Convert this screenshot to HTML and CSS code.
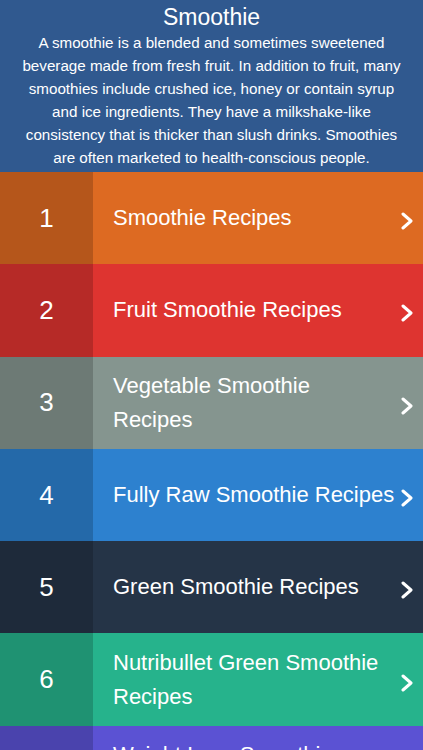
FILE: index.html
```html
<!DOCTYPE html>
<html>
    <head>
        <title>Smoothie</title>
        <link rel="stylesheet" href="styles.css">
    </head>
    <body>
        <div class="intro">
            <h1 class="introTitle">Smoothie</h1>
            <p class="introText">A smoothie is a blended and sometimes sweetened<br>beverage made from fresh fruit. In addition to fruit, many<br>smoothies include crushed ice, honey or contain syrup<br>and ice ingredients. They have a milkshake-like<br>consistency that is thicker than slush drinks. Smoothies<br>are often marketed to health-conscious people.</p>
        </div>

        <div class="list">
            <div class="row orange">
                <div class="num">1</div>
                <div class="label">Smoothie Recipes</div>
                <svg class="chev" width="12" height="18" viewBox="0 0 12 18"><path d="M2 2 L10 9 L2 16" /></svg>
            </div>
            <div class="row red">
                <div class="num">2</div>
                <div class="label">Fruit Smoothie Recipes</div>
                <svg class="chev" width="12" height="18" viewBox="0 0 12 18"><path d="M2 2 L10 9 L2 16" /></svg>
            </div>
            <div class="row grey">
                <div class="num">3</div>
                <div class="label">Vegetable Smoothie<br>Recipes</div>
                <svg class="chev" width="12" height="18" viewBox="0 0 12 18"><path d="M2 2 L10 9 L2 16" /></svg>
            </div>
            <div class="row blue">
                <div class="num">4</div>
                <div class="label">Fully Raw Smoothie Recipes</div>
                <svg class="chev" width="12" height="18" viewBox="0 0 12 18"><path d="M2 2 L10 9 L2 16" /></svg>
            </div>
            <div class="row navy">
                <div class="num">5</div>
                <div class="label">Green Smoothie Recipes</div>
                <svg class="chev" width="12" height="18" viewBox="0 0 12 18"><path d="M2 2 L10 9 L2 16" /></svg>
            </div>
            <div class="row green">
                <div class="num">6</div>
                <div class="label">Nutribullet Green Smoothie<br>Recipes</div>
                <svg class="chev" width="12" height="18" viewBox="0 0 12 18"><path d="M2 2 L10 9 L2 16" /></svg>
            </div>
            <div class="row purple">
                <div class="num">7</div>
                <div class="label">Weight Loss Smoothie<br>Recipes</div>
                <svg class="chev" width="12" height="18" viewBox="0 0 12 18"><path d="M2 2 L10 9 L2 16" /></svg>
            </div>
        </div>
    </body>
</html>
```

FILE: styles.css
```css
body, html {
    margin: 0;
    padding: 0;
}

body {
    font-family: "Liberation Sans", Arial, sans-serif;
    color: white;
    background: #5b52d3;
}

.intro {
    background: #30598f;
    height: 172px;
    box-sizing: border-box;
    padding: 3px 0 3px 0;
    text-align: center;
}

.introTitle {
    margin: 0;
    font-size: 23px;
    line-height: 28px;
    font-weight: normal;
}

.introText {
    margin: 0;
    font-size: 15.2px;
    line-height: 23px;
}

.row {
    display: flex;
    align-items: center;
    height: 92.3px;
}

.num {
    width: 93px;
    height: 100%;
    flex-shrink: 0;
    display: flex;
    align-items: center;
    justify-content: center;
    font-size: 26px;
    background: rgba(0, 0, 0, 0.18);
}

.label {
    flex: 1;
    padding-left: 20px;
    font-size: 22px;
    line-height: 34px;
    white-space: nowrap;
}

.chev {
    margin: 6px 10px 0 0;
    flex-shrink: 0;
}
.chev path {
    fill: none;
    stroke: white;
    stroke-width: 3;
    stroke-linecap: round;
    stroke-linejoin: round;
}

.orange { background: #dd6a22; }
.red    { background: #de3430; }
.grey   { background: #85958f; }
.blue   { background: #2d81cf; }
.navy   { background: #253447; }
.green  { background: #26b38c; }
.purple { background: #5b52d3; }
```
